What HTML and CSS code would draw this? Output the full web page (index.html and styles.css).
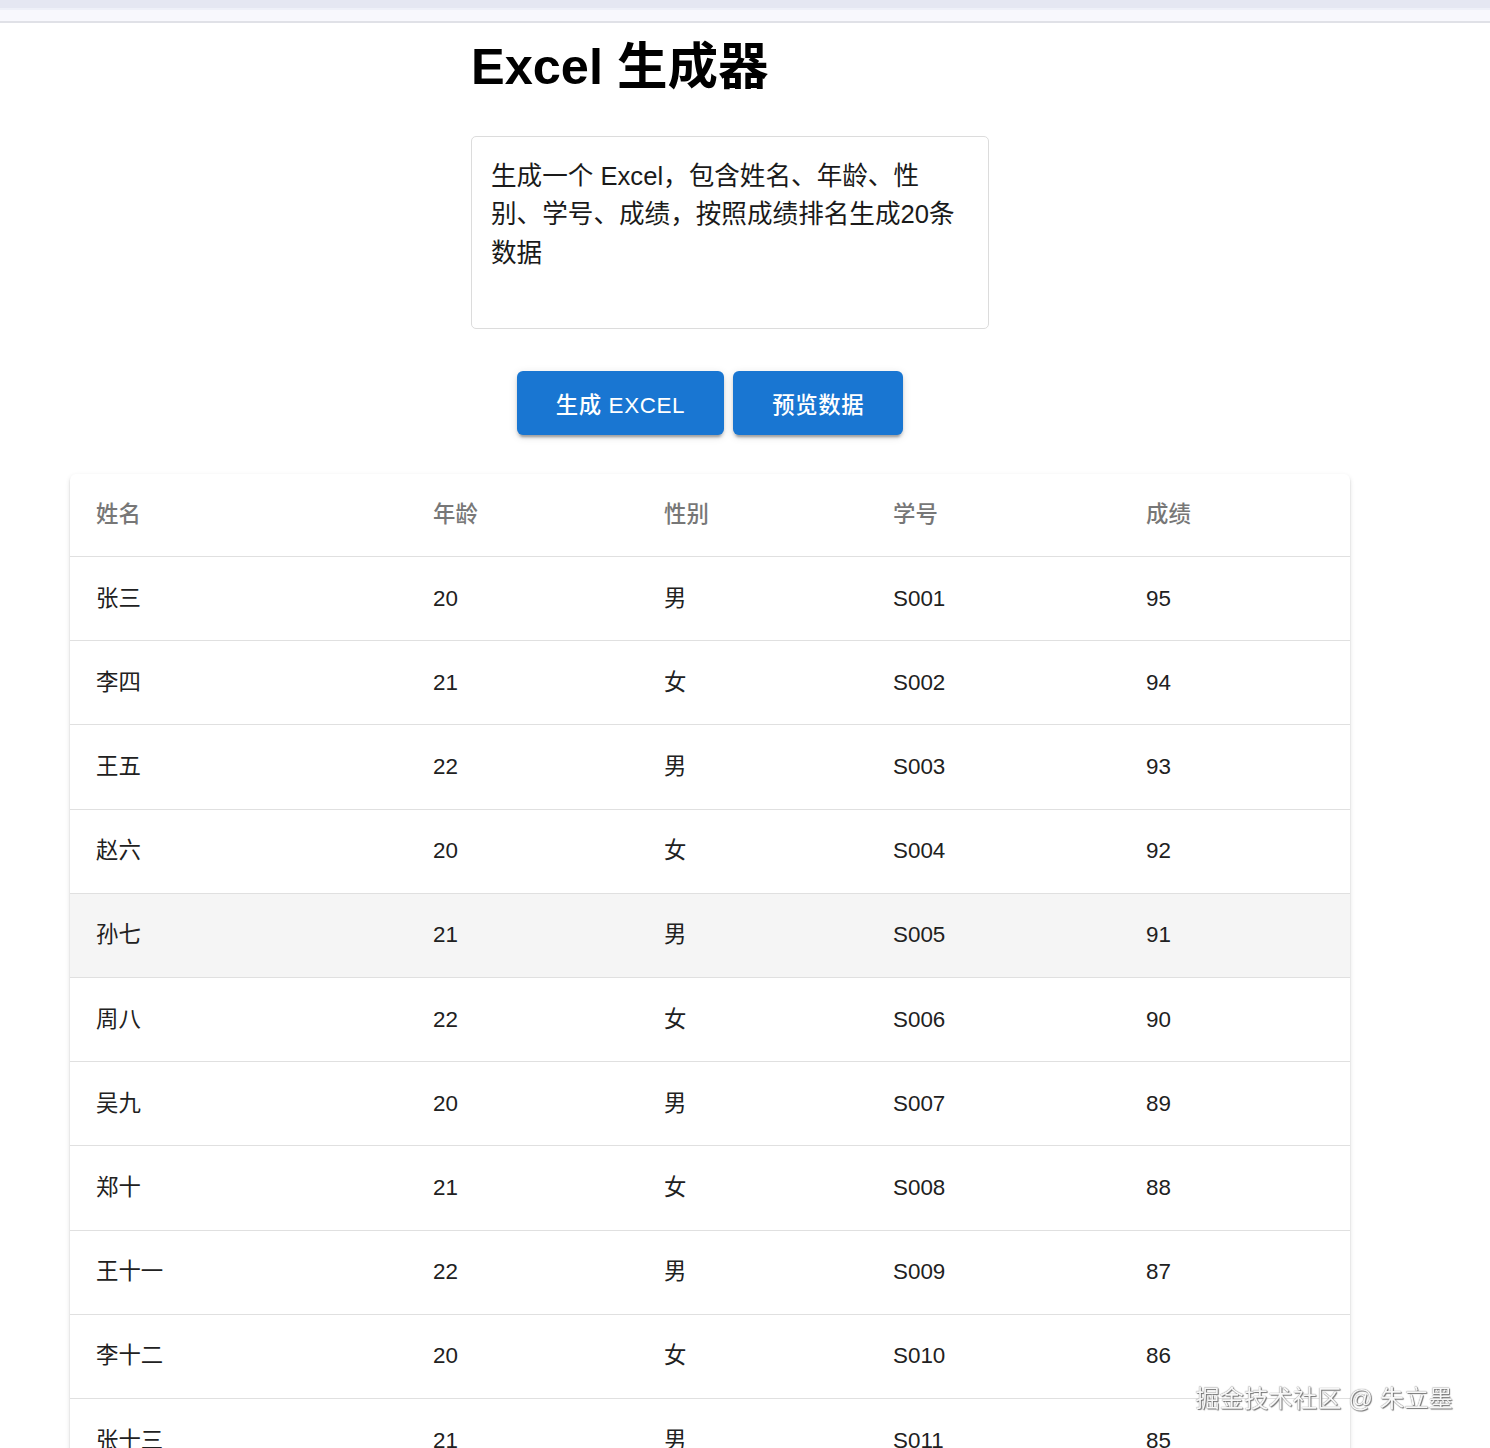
FILE: index.html
```html
<!DOCTYPE html>
<html lang="zh-CN">
<head>
<meta charset="utf-8">
<title>Excel 生成器</title>
<link rel="stylesheet" href="styles.css">
</head>
<body>
<div class="chrome">
  <div class="chrome-top"></div>
  <div class="chrome-bar"></div>
</div>
<main class="page">
  <h1 class="title">Excel 生成器</h1>
  <textarea class="prompt">生成一个 Excel，包含姓名、年龄、性别、学号、成绩，按照成绩排名生成20条数据</textarea>
  <div class="actions">
    <button class="btn">生成 EXCEL</button>
    <button class="btn">预览数据</button>
  </div>
  <div class="paper">
    <table class="grid">
      <colgroup>
        <col class="c1"><col class="c2"><col class="c3"><col class="c4"><col class="c5">
      </colgroup>
      <thead>
        <tr><th>姓名</th><th>年龄</th><th>性别</th><th>学号</th><th>成绩</th></tr>
      </thead>
      <tbody>
        <tr><td>张三</td><td>20</td><td>男</td><td>S001</td><td>95</td></tr>
        <tr><td>李四</td><td>21</td><td>女</td><td>S002</td><td>94</td></tr>
        <tr><td>王五</td><td>22</td><td>男</td><td>S003</td><td>93</td></tr>
        <tr><td>赵六</td><td>20</td><td>女</td><td>S004</td><td>92</td></tr>
        <tr class="hover"><td>孙七</td><td>21</td><td>男</td><td>S005</td><td>91</td></tr>
        <tr><td>周八</td><td>22</td><td>女</td><td>S006</td><td>90</td></tr>
        <tr><td>吴九</td><td>20</td><td>男</td><td>S007</td><td>89</td></tr>
        <tr><td>郑十</td><td>21</td><td>女</td><td>S008</td><td>88</td></tr>
        <tr><td>王十一</td><td>22</td><td>男</td><td>S009</td><td>87</td></tr>
        <tr><td>李十二</td><td>20</td><td>女</td><td>S010</td><td>86</td></tr>
        <tr><td>张十三</td><td>21</td><td>男</td><td>S011</td><td>85</td></tr>
        <tr><td>赵十四</td><td>22</td><td>女</td><td>S012</td><td>84</td></tr>
        <tr><td>孙十五</td><td>20</td><td>男</td><td>S013</td><td>83</td></tr>
        <tr><td>周十六</td><td>21</td><td>女</td><td>S014</td><td>82</td></tr>
        <tr><td>吴十七</td><td>22</td><td>男</td><td>S015</td><td>81</td></tr>
        <tr><td>郑十八</td><td>20</td><td>女</td><td>S016</td><td>80</td></tr>
        <tr><td>王十九</td><td>21</td><td>男</td><td>S017</td><td>79</td></tr>
        <tr><td>李二十</td><td>22</td><td>女</td><td>S018</td><td>78</td></tr>
        <tr><td>张二一</td><td>20</td><td>男</td><td>S019</td><td>77</td></tr>
        <tr><td>赵二二</td><td>21</td><td>女</td><td>S020</td><td>76</td></tr>
      </tbody>
    </table>
  </div>
</main>
<div class="watermark">掘金技术社区 @ 朱立墨</div>
</body>
</html>
```
FILE: styles.css
```css
html, body {
  margin: 0;
  padding: 0;
  background: #ffffff;
}
body {
  font-family: "Liberation Sans", "Noto Sans CJK SC", sans-serif;
  color: #212121;
}
.chrome {
  display: flex;
  flex-direction: column;
}
.chrome-top {
  height: 8px;
  background: #e5e7f2;
  border-bottom: 2px solid #eef0f8;
}
.chrome-bar {
  height: 11px;
  background: #f8f8fd;
  border-bottom: 2px solid #e0e1e7;
}
.page {
  width: 1420px;
  display: flex;
  flex-direction: column;
  padding-bottom: 40px;
}
.title {
  margin: 14px 0 0 471px;
  font-size: 50.5px;
  line-height: 60px;
  font-weight: 700;
  color: #000;
}
.prompt {
  display: block;
  margin: 39px 0 0 471px;
  width: 518px;
  height: 193px;
  box-sizing: border-box;
  padding: 20px 19px 18px 19px;
  border: 1px solid #dcdcdc;
  border-radius: 5px;
  font-family: "Liberation Sans", "Noto Sans CJK SC", sans-serif;
  font-size: 25.6px;
  line-height: 38.4px;
  color: #1a1a1a;
  resize: none;
  overflow: hidden;
  background: #fff;
  outline: none;
}
.actions {
  display: flex;
  justify-content: center;
  gap: 9px;
  margin-top: 42px;
}
.btn {
  height: 64px;
  padding: 0 39px;
  border: none;
  border-radius: 6px;
  background: #1976d2;
  color: #fff;
  font-family: "Liberation Sans", "Noto Sans CJK SC", sans-serif;
  font-size: 22.4px;
  font-weight: 500;
  letter-spacing: 0.64px;
  box-shadow: 0 5px 2px -3px rgba(0,0,0,0.2), 0 3px 3px 0 rgba(0,0,0,0.14), 0 2px 8px 0 rgba(0,0,0,0.12);
}
.paper {
  margin: 39px 70px 0 70px;
  border-radius: 6px;
  background: #fff;
  box-shadow: 0 3px 2px -2px rgba(0,0,0,0.2), 0 2px 2px 0 rgba(0,0,0,0.14), 0 2px 5px 0 rgba(0,0,0,0.12);
  overflow: hidden;
}
.grid {
  width: 100%;
  border-collapse: collapse;
  table-layout: fixed;
}
.c1 { width: 337px; }
.c2 { width: 231px; }
.c3 { width: 229px; }
.c4 { width: 253px; }
.c5 { width: 230px; }
.grid th,
.grid td {
  text-align: left;
  padding: 25.6px 26px;
  font-size: 22.4px;
  line-height: 32px;
  border-bottom: 1px solid #e0e0e0;
}
.grid th {
  font-weight: 500;
  color: #777777;
  padding-top: 24.5px;
}
.grid td {
  color: #212121;
}
.grid tr.hover td {
  background: #f5f5f5;
}
.watermark {
  position: fixed;
  right: 37px;
  bottom: 34px;
  font-family: "Liberation Sans", "Noto Sans CJK SC", sans-serif;
  font-size: 24.4px;
  line-height: 30px;
  color: #f7f7f7;
  text-shadow: 0 0 1px #555, 1px 1px 1px #777;
}
```
